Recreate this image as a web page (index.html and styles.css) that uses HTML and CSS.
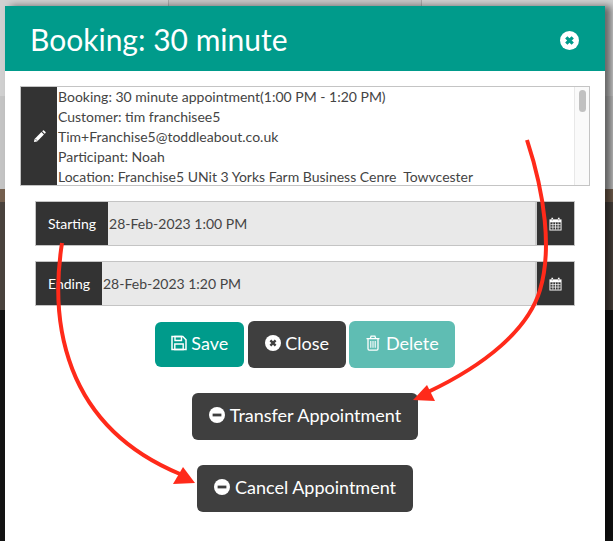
FILE: index.html
```html
<!DOCTYPE html>
<html lang="en">
<head>
  <meta charset="UTF-8">
  <title>Booking: 30 minute</title>
  <link rel="stylesheet" href="styles.css">
</head>
<body>

  <div class="backdrop">
    <div class="band band-top">
      <div class="band-cell band-cell-left"></div>
      <div class="band-cell band-cell-mid"></div>
    </div>
    <div class="band band-grey"></div>
    <div class="band band-brown"></div>
    <div class="band band-taupe"></div>
    <div class="band band-black"></div>
  </div>

  <div class="modal">
    <div class="modal-header">
      <h1>Booking: 30 minute</h1>
      <svg class="icon-close" viewBox="0 0 20 20">
        <circle cx="10" cy="10" r="10" fill="#fff"/>
        <path d="M6.6 6.6l6.8 6.8M13.4 6.6l-6.8 6.8" stroke="#009b8b" stroke-width="3.4"/>
      </svg>
    </div>

    <div class="modal-body">
      <div class="notes">
        <div class="addon addon-notes">
          <svg class="icon-pencil" viewBox="0 0 14 14">
            <path d="M1 13l.7-3.4 7.4-7.4 2.7 2.7-7.4 7.4z" fill="#fff"/>
            <path d="M9.9 1.4l.9-.9c.3-.3.7-.3 1 0l1.7 1.7c.3.3.3.7 0 1l-.9.9z" fill="#fff"/>
            <path d="M2.6 9.7l1.8 1.8" stroke="#333" stroke-width=".7"/>
          </svg>
        </div>
        <div class="notes-text">
          <div>Booking: 30 minute appointment(1:00 PM - 1:20 PM)</div>
          <div>Customer: tim franchisee5</div>
          <div>Tim+Franchise5@toddleabout.co.uk</div>
          <div>Participant: Noah</div>
          <div>Location: Franchise5 UNit 3 Yorks Farm Business Cenre&nbsp; Towvcester</div>
        </div>
        <div class="scrollbar"><div class="scrollbar-thumb"></div></div>
      </div>

      <div class="date-row">
        <div class="addon addon-label">Starting</div>
        <div class="date-value">28-Feb-2023 1:00 PM</div>
        <div class="addon addon-calendar">
          <svg class="icon-calendar" viewBox="0 0 14 14">
            <path d="M.5 2h13v12H.5z" fill="#fff"/>
            <path d="M1.5 5.2h11v7.8h-11z" fill="#333"/>
            <path d="M1.5 7.7h11M1.5 10.3h11M4.2 5.2v7.8M7 5.2v7.8M9.8 5.2v7.8" stroke="#fff" stroke-width=".8"/>
            <path d="M3.5 .4v2.8M10.5 .4v2.8" stroke="#fff" stroke-width="1.8"/>
            <path d="M3.5 1.6v1.6M10.5 1.6v1.6" stroke="#333" stroke-width=".6"/>
          </svg>
        </div>
      </div>

      <div class="date-row">
        <div class="addon addon-label">Ending</div>
        <div class="date-value">28-Feb-2023 1:20 PM</div>
        <div class="addon addon-calendar">
          <svg class="icon-calendar" viewBox="0 0 14 14">
            <path d="M.5 2h13v12H.5z" fill="#fff"/>
            <path d="M1.5 5.2h11v7.8h-11z" fill="#333"/>
            <path d="M1.5 7.7h11M1.5 10.3h11M4.2 5.2v7.8M7 5.2v7.8M9.8 5.2v7.8" stroke="#fff" stroke-width=".8"/>
            <path d="M3.5 .4v2.8M10.5 .4v2.8" stroke="#fff" stroke-width="1.8"/>
            <path d="M3.5 1.6v1.6M10.5 1.6v1.6" stroke="#333" stroke-width=".6"/>
          </svg>
        </div>
      </div>

      <div class="actions">
        <button class="btn btn-save">
          <svg class="icon-btn" viewBox="0 0 16 16">
            <path d="M1 1.5h10.8l3.2 3.2v9.8H1z" fill="none" stroke="#fff" stroke-width="1.5"/>
            <path d="M4 1.5h6.5v4H4zM3.8 9h8.4v5.5H3.8z" fill="none" stroke="#fff" stroke-width="1.4"/>
          </svg>
          Save
        </button>
        <button class="btn btn-dark btn-close">
          <svg class="icon-btn" viewBox="0 0 16 16">
            <circle cx="8" cy="8" r="8" fill="#fff"/>
            <path d="M5.4 5.4l5.2 5.2M10.6 5.4l-5.2 5.2" stroke="#3f3f3f" stroke-width="2.4"/>
          </svg>
          Close
        </button>
        <button class="btn btn-delete">
          <svg class="icon-btn" viewBox="0 0 16 16">
            <path d="M1.5 3.6h13M5.3 3.4l.8-2.2h3.8l.8 2.2" fill="none" stroke="#fff" stroke-width="1.3"/>
            <path d="M3 3.6v10.2c0 .8.5 1.4 1.2 1.4h7.6c.7 0 1.2-.6 1.2-1.4V3.6" fill="none" stroke="#fff" stroke-width="1.3"/>
            <path d="M5.8 6v6.8M8 6v6.8M10.2 6v6.8" stroke="#fff" stroke-width="1.1"/>
          </svg>
          Delete
        </button>
      </div>

      <div class="actions">
        <button class="btn btn-dark btn-wide">
          <svg class="icon-btn" viewBox="0 0 16 16">
            <circle cx="8" cy="8" r="8" fill="#fff"/>
            <path d="M3.6 6.6h8.8v2.8H3.6z" fill="#3f3f3f"/>
          </svg>
          Transfer Appointment
        </button>
      </div>

      <div class="actions">
        <button class="btn btn-dark btn-wide">
          <svg class="icon-btn" viewBox="0 0 16 16">
            <circle cx="8" cy="8" r="8" fill="#fff"/>
            <path d="M3.6 6.6h8.8v2.8H3.6z" fill="#3f3f3f"/>
          </svg>
          Cancel Appointment
        </button>
      </div>
    </div>
  </div>

  <!-- red arrows drawn over the screenshot -->
  <svg class="arrows" viewBox="0 0 613 541">
    <path d="M527 140C545 195 552 250 540 290C528 330 485 365 428 392" fill="none" stroke="#ff2a1a" stroke-width="4"/>
    <path d="M413 400L435 401L427 385z" fill="#ff2a1a"/>
    <path d="M62 243C50 320 62 425 180 474" fill="none" stroke="#ff2a1a" stroke-width="4"/>
    <path d="M195 483L173 484L183 467z" fill="#ff2a1a"/>
  </svg>

</body>
</html>
```

FILE: styles.css
```css
* {
  margin: 0;
  padding: 0;
  box-sizing: border-box;
}

html,
body {
  height: 100%;
  overflow: hidden;
}

body {
  font-family: 'Lato', 'Liberation Sans', sans-serif;
  color: #444;
  padding: 6px 8px 0 5px;
}

.backdrop {
  position: absolute;
  inset: 0;
  display: flex;
  flex-direction: column;
}

.band-top {
  display: flex;
  height: 96px;
  background-color: #d0d0d0;
}

.band-cell {
  height: 6px;
}

.band-cell-left {
  width: 168px;
}

.band-cell-mid {
  width: 254px;
  background-color: #c6c6c6;
  border-left: 1px solid #aaa;
  border-right: 1px solid #aaa;
}

.band-grey {
  height: 93px;
  background-color: #c4c4c4;
}

.band-brown {
  height: 13px;
  background-color: #75604f;
}

.band-taupe {
  height: 108px;
  background-color: #4a433e;
}

.band-black {
  flex: 1;
  background-color: #141414;
}

.modal {
  position: relative;
  width: 600px;
  height: 100%;
  background-color: #fff;
  box-shadow: 6px 0 7px rgba(0, 0, 0, 0.5);
}

.modal-header {
  display: flex;
  justify-content: space-between;
  align-items: center;
  height: 65px;
  padding: 0 26px 0 25px;
  background-color: #009b8b;
}

.modal-header h1 {
  font-size: 30px;
  font-weight: 400;
  color: #fff;
}

.icon-close {
  width: 19px;
  height: 19px;
  margin-top: 3px;
}

.modal-body {
  padding: 15px;
}

.notes {
  display: flex;
  height: 100px;
  border: 1px solid #c4c4c4;
}

.addon {
  display: flex;
  align-items: center;
  justify-content: center;
  flex-shrink: 0;
  background-color: #333;
  color: #fff;
  font-size: 14px;
}

.addon-notes {
  width: 36px;
}

.icon-pencil {
  width: 13px;
  height: 13px;
}

.icon-calendar {
  width: 13px;
  height: 14px;
}

.notes-text {
  flex: 1;
  padding-left: 1px;
  font-size: 14px;
  line-height: 20px;
  white-space: nowrap;
  overflow: hidden;
}

.scrollbar {
  flex-shrink: 0;
  width: 15px;
  padding: 3px 3px 0 4px;
  background-color: #fafafa;
  border-left: 1px solid #e8e8e8;
}

.scrollbar-thumb {
  height: 22px;
  background-color: #c1c1c1;
  border-radius: 4px;
}

.date-row {
  display: flex;
  height: 45px;
  margin: 15px 15px 0;
  border: 1px solid #c4c4c4;
  background-color: #e9e9e9;
}

.addon-label {
  padding: 0 12px;
}

.date-value {
  flex: 1;
  display: flex;
  align-items: center;
  padding-left: 1px;
  font-size: 14px;
  border-right: 2px solid #ccc;
}

.addon-calendar {
  width: 37px;
}

.actions {
  display: flex;
  justify-content: center;
  align-items: center;
  gap: 3px;
  margin-top: 15px;
}

.actions + .actions {
  margin-top: 25px;
}

.btn {
  display: flex;
  align-items: center;
  gap: 5px;
  height: 47px;
  padding: 0 16px 3px;
  border: none;
  border-radius: 6px;
  font-family: inherit;
  font-size: 18px;
  color: #fff;
}

.icon-btn {
  width: 16px;
  height: 16px;
}

.btn-wide {
  padding: 0 17px 3px;
}

.btn-save {
  gap: 4px;
  height: 45px;
  margin-right: 1px;
  background-color: #009b8b;
}

.btn-close {
  gap: 4px;
  padding: 0 17px 3px;
}

.btn-dark {
  background-color: #3f3f3f;
}

.btn-delete {
  background-color: #5fbdb3;
}

.arrows {
  position: absolute;
  top: 0;
  left: 0;
  width: 613px;
  height: 541px;
}
```
